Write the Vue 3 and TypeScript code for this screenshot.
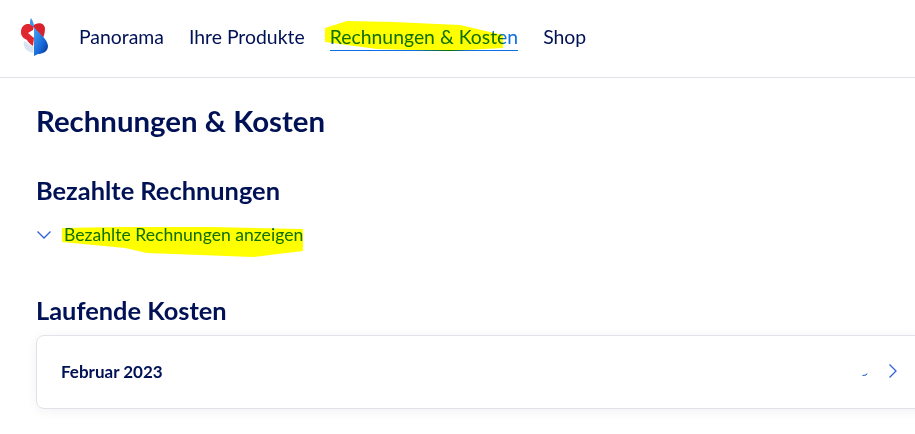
<template>
  <div class="page">
    <header class="topbar">
      <svg class="logo" width="30" height="40" viewBox="0 0 30 40" aria-hidden="true">
        <defs>
          <linearGradient id="blue" x1="0" y1="0" x2="1" y2="1">
            <stop offset="0" stop-color="#4aa3f0" />
            <stop offset="0.6" stop-color="#1668d8" />
            <stop offset="1" stop-color="#0a2a80" />
          </linearGradient>
        </defs>
        <path d="M14 9C10 5 2 7 2 15c0 4 2 6 6 8 1 2 3 4 6 6l1-8-6-5 5-3 1-4z" fill="#e0262f" />
        <path d="M14 9c3-4 12-4 12 3 0 5-2 9-3 11-3-5-6-9-9-14z" fill="#d8232f" />
        <path d="M5 24c-1 5 1 10 9 12l1-6c-3-1-6-4-10-6z" fill="#d8e4f4" />
        <path d="M12 1c2 3 3 6 3 9-2-1-3-2-4-3 0-2 0-4 1-6z" fill="#3a97e6" />
        <path d="M15 10c3 5 14 12 14 19 0 6-6 8-10 8l-4 2z" fill="url(#blue)" />
      </svg>
      <nav class="nav">
        <a v-for="item in navItems" :key="item" class="nav-link" :class="{ active: item === activeItem }">
          {{ item }}
          <svg v-if="item === activeItem" class="marker marker-nav" viewBox="0 0 180 36" aria-hidden="true">
            <polygon points="0,11 22,4 68,5 135,8 178,18 178,31 125,34 52,32 0,25" />
          </svg>
        </a>
      </nav>
    </header>

    <main class="content">
      <h1>Rechnungen &amp; Kosten</h1>

      <h2 class="paid-title">Bezahlte Rechnungen</h2>
      <a class="toggle">
        <svg class="chevron" width="16" height="10" viewBox="0 0 16 10" aria-hidden="true">
          <path d="M1.5 1.5 8 8l6.5-6.5" />
        </svg>
        <span class="toggle-text">
          Bezahlte Rechnungen anzeigen
          <svg class="marker marker-toggle" viewBox="0 0 242 40" aria-hidden="true">
            <polygon points="0,8 60,7 150,7 241,9 241,31 191,37 85,33 63,28 0,22" />
          </svg>
        </span>
      </a>

      <h2 class="costs-title">Laufende Kosten</h2>
      <section class="card">
        <span class="card-label">Februar 2023</span>
        <div class="card-end">
          <svg class="tick" width="6" height="6" viewBox="0 0 6 6" aria-hidden="true">
            <path d="M0.5 4.5 4 4 5 2.5" />
          </svg>
          <svg class="arrow" width="10" height="16" viewBox="0 0 10 16" aria-hidden="true">
            <path d="M1.5 1.5 8 8l-6.5 6.5" />
          </svg>
        </div>
      </section>
    </main>
  </div>
</template>

<script setup lang="ts">
const navItems: string[] = ['Panorama', 'Ihre Produkte', 'Rechnungen & Kosten', 'Shop']
const activeItem = 'Rechnungen & Kosten'
</script>

<style>
html,
body {
  background: #fff;
  overflow: hidden;
}
</style>

<style scoped>
.page {
  width: 915px;
  height: 434px;
  overflow: hidden;
  font-family: "Open Sans", "Noto Sans", sans-serif;
  color: #001155;
}

.topbar {
  display: flex;
  align-items: center;
  height: 74px;
  padding: 0 0 3px 19px;
  border-bottom: 1px solid #dfe2e6;
}

.logo {
  flex: none;
  margin-right: 30px;
}

.nav {
  display: flex;
  gap: 25px;
  font-family: "Lato", sans-serif;
  font-size: 19.4px;
}

.nav-link {
  position: relative;
  padding: 2px 0 1px;
  line-height: 24px;
  border-bottom: 1px solid transparent;
}

.nav-link.active {
  color: #0f6fe0;
  border-bottom-color: #0f6fe0;
}

.marker {
  position: absolute;
  fill: #ffff00;
  mix-blend-mode: multiply;
  pointer-events: none;
}

.marker-nav {
  left: -5px;
  top: -6px;
  width: 180px;
  height: 36px;
}

.content {
  padding: 0 0 0 36px;
}

h1,
h2 {
  margin: 0;
  font-family: "Lato", sans-serif;
  font-weight: 700;
}

h1 {
  margin-top: 24px;
  font-size: 29.4px;
  line-height: 38px;
}

h2 {
  font-size: 25.4px;
  line-height: 32px;
}

.paid-title {
  margin-top: 34px;
}

.toggle {
  display: flex;
  align-items: center;
  margin-top: 17px;
  color: #0f6fe0;
  font-family: "Lato", sans-serif;
  font-size: 17.6px;
  line-height: 24px;
}

.chevron {
  margin-right: 12px;
  fill: none;
  stroke: #2f62d8;
  stroke-width: 1.3;
}

.toggle-text {
  position: relative;
}

.marker-toggle {
  left: -2px;
  top: -3px;
  width: 242px;
  height: 40px;
}

.costs-title {
  margin-top: 47px;
}

.card {
  display: flex;
  align-items: center;
  justify-content: space-between;
  width: 890px;
  height: 74px;
  box-sizing: border-box;
  margin-top: 9px;
  padding: 0 27px 2px 24px;
  background: #fff;
  border: 1px solid #e0e4ea;
  border-radius: 8px;
  box-shadow: 0 2px 12px rgba(0, 17, 85, 0.06);
}

.card-label {
  font-family: "Lato", sans-serif;
  font-size: 17px;
  font-weight: 700;
}

.card-end {
  display: flex;
  align-items: center;
  gap: 20px;
}

.tick {
  margin-top: 6px;
  fill: none;
  stroke: #1a55c4;
  stroke-width: 1;
}

.arrow {
  fill: none;
  stroke: #2f62d8;
  stroke-width: 1.3;
}
</style>
